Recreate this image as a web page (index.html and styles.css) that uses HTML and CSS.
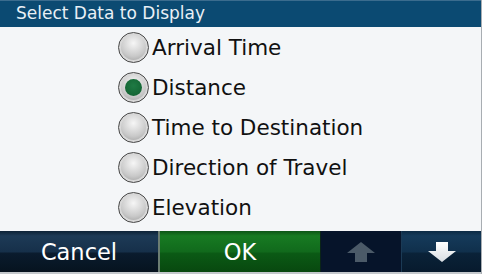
FILE: index.html
```html
<!DOCTYPE html>
<html lang="en">
<head>
  <meta charset="UTF-8">
  <title>Select Data to Display</title>
  <link rel="stylesheet" href="styles.css">
</head>
<body>
  <div class="screen">
    <!-- title -->
    <div class="title-bar">Select Data to Display</div>

    <!-- options -->
    <div class="option-list">
      <div class="option"><span class="radio"></span><span class="label">Arrival Time</span></div>
      <div class="option"><span class="radio checked"></span><span class="label">Distance</span></div>
      <div class="option"><span class="radio"></span><span class="label">Time to Destination</span></div>
      <div class="option"><span class="radio"></span><span class="label">Direction of Travel</span></div>
      <div class="option"><span class="radio"></span><span class="label">Elevation</span></div>
    </div>

    <!-- bottom buttons -->
    <div class="button-bar">
      <div class="btn btn-cancel">Cancel</div>
      <div class="btn btn-ok">OK</div>
      <div class="btn btn-up">
        <svg width="32" height="22" viewBox="0 0 32 22"><path d="M16 1 L30 12 L22 12 L22 21 L10 21 L10 12 L2 12 Z" fill="#4b5a68"/></svg>
      </div>
      <div class="btn btn-down">
        <svg width="32" height="22" viewBox="0 0 32 22">
          <defs>
            <linearGradient id="dg" x1="0" y1="0" x2="0" y2="1">
              <stop offset="0" stop-color="#ffffff"/>
              <stop offset="1" stop-color="#d8dde2"/>
            </linearGradient>
          </defs>
          <path d="M10 1 L22 1 L22 10 L30 10 L16 21 L2 10 L10 10 Z" fill="url(#dg)"/>
        </svg>
      </div>
    </div>
  </div>
</body>
</html>
```

FILE: styles.css
```css
* {
  margin: 0;
  padding: 0;
  box-sizing: border-box;
}

body {
  background-color: #f4f6f8;
  font-family: "DejaVu Sans", sans-serif;
}

.screen {
  width: 482px;
  height: 274px;
  display: flex;
  flex-direction: column;
  background-color: #f4f6f8;
  border-right: 1px solid #a8adb2;
}

/* 标题栏 */
.title-bar {
  height: 27px;
  background-color: #0b4a72;
  border-top: 1px solid #3b6c8e;
  color: #e8f0f6;
  font-size: 17px;
  line-height: 25px;
  padding-left: 16px;
}

/* 选项列表 */
.option-list {
  flex: 1;
  display: flex;
  flex-direction: column;
  padding: 0 0 0 118px;
}

.option {
  height: 40px;
  display: flex;
  align-items: center;
}

.radio {
  width: 31px;
  height: 31px;
  border-radius: 50%;
  border: 1px solid #4a4a4a;
  background: radial-gradient(circle at 50% 35%, #f6f6f6 0%, #c9c9c9 55%, #8d8d8d 100%);
  box-shadow: inset 0 0 0 2px #d8d8d8;
  margin-right: 3px;
  display: flex;
  align-items: center;
  justify-content: center;
}

.radio.checked::after {
  content: "";
  width: 17px;
  height: 17px;
  border-radius: 50%;
  background: radial-gradient(circle at 50% 40%, #1f7a44 0%, #0f5e2e 100%);
}

.label {
  font-size: 21.5px;
  color: #111;
}

/* 底部按钮 */
.button-bar {
  height: 43px;
  display: flex;
  border-bottom: 2px solid #c4c8cc;
}

.btn {
  display: flex;
  align-items: center;
  justify-content: center;
  color: #fff;
  font-size: 22.5px;
}

.btn-cancel {
  width: 160px;
  background: linear-gradient(#0d2236 0%, #1d3a56 12%, #16304a 50%, #0a1b2d 55%, #06131f 100%);
  border-right: 2px solid #6b7d72;
}

.btn-ok {
  width: 161px;
  background: linear-gradient(#0c5416 0%, #177a22 12%, #116a1c 50%, #0b5a15 55%, #08480f 100%);
  border-right: 1px solid #0a2418;
}

.btn-up {
  width: 81px;
  background-color: #06142a;
  border-right: 1px solid #1b3a55;
}

.btn-down {
  flex: 1;
  background: linear-gradient(#0c2a44 0%, #153a5a 12%, #10304c 50%, #0a2238 55%, #071a2d 100%);
}
```
